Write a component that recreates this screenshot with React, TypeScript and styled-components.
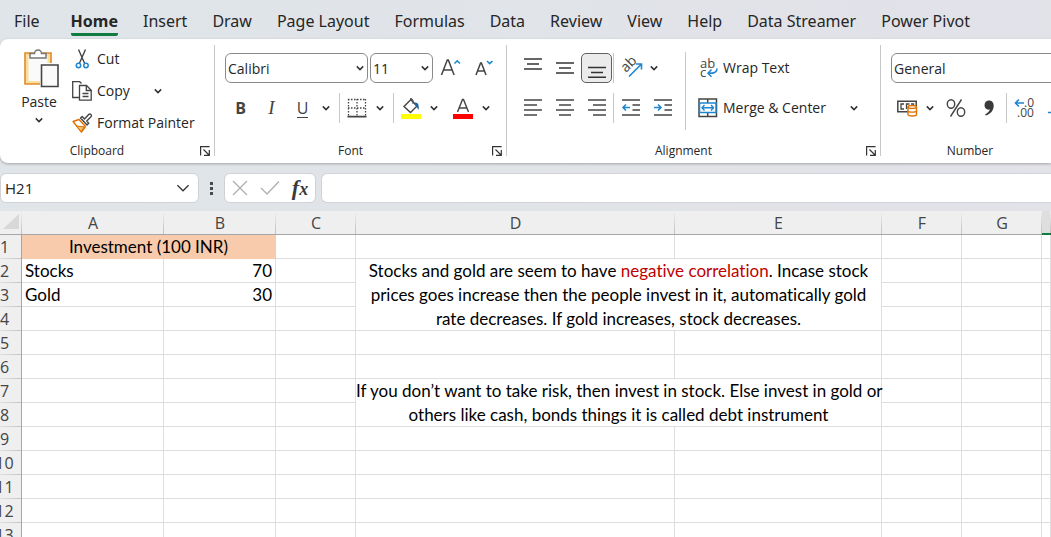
import React from "react";
import styled, { createGlobalStyle, css } from "styled-components";

const uiFont = `"Open Sans", "Noto Sans", sans-serif`;
const tabFont = `"Noto Sans", "Open Sans", sans-serif`;
const cellFont = `Lato, "Noto Sans", sans-serif`;
const ink = "#262626";
const stroke = "#444444";
const blue = "#1f87d0";

const GlobalStyle = createGlobalStyle`
  *, *::before, *::after { box-sizing: border-box; }
  body { margin: 0; }
  button, input, select { font: inherit; color: inherit; margin: 0; padding: 0; border: 0; background: none; }
  svg { display: block; flex: none; overflow: visible; }
`;

const Window = styled.div`
  display: flex;
  flex-direction: column;
  height: 100vh;
  overflow: hidden;
  color: ${ink};
  background: linear-gradient(90deg, #dfe5e8, #e2e2e9);
  font-family: ${uiFont};
  font-size: 14px;
`;

const TabBar = styled.nav`
  flex: none;
  display: flex;
  gap: 25px;
  height: 39px;
  padding: 9px 0 0 14px;
  overflow: hidden;
`;

const Tab = styled.button<{ $active?: boolean; $first?: boolean }>`
  flex: none;
  height: 27px;
  font-family: ${tabFont};
  font-size: 16px;
  line-height: 24px;
  white-space: nowrap;
  font-weight: ${(p) => (p.$active ? 700 : 400)};
  border-bottom: 3px solid ${(p) => (p.$active ? "#107c41" : "transparent")};
  border-radius: 2px;
  margin-right: ${(p) => (p.$first ? "6px" : "0")};
`;

const Ribbon = styled.div`
  flex: none;
  display: flex;
  padding: 4px 0 6px;
  background: #ffffff;
  border-radius: 8px 0 0 8px;
  box-shadow: 0 1px 3px rgba(0, 0, 0, 0.28);
  overflow: hidden;
`;

const Group = styled.section<{ $width: number; $grow?: boolean }>`
  flex: ${(p) => (p.$grow ? 1 : 0)} 0 ${(p) => p.$width}px;
  display: flex;
  flex-direction: column;
`;

const GroupBody = styled.div`
  display: flex;
  height: 98px;
  padding-left: 10px;
`;

const GroupFooter = styled.div`
  display: flex;
  gap: 6px;
  align-items: flex-end;
  padding-right: 4px;
  height: 16px;
`;

const GroupTitle = styled.span`
  flex: 1;
  text-align: center;
  font-size: 12px;
  line-height: 12px;
`;

const GroupDivider = styled.div`
  flex: none;
  width: 1px;
  margin: 2px 0 1px;
  background: #c8c8c8;
`;

const Launcher = styled.button`
  width: 10px;
  height: 12px;
`;

const Stack = styled.div<{ $gap?: number; $top?: number }>`
  display: flex;
  flex-direction: column;
  gap: ${(p) => p.$gap ?? 0}px;
  padding-top: ${(p) => p.$top ?? 0}px;
`;

const Row = styled.div<{ $gap?: number; $tall?: number }>`
  display: flex;
  align-items: center;
  gap: ${(p) => p.$gap ?? 0}px;
  height: ${(p) => p.$tall ?? 30}px;
`;

const Divider = styled.div<{ $tall?: boolean }>`
  flex: none;
  width: 1px;
  background: #c8c8c8;
  ${(p) =>
    p.$tall
      ? css`
          height: 78px;
          margin: 9px 12px 0 7px;
        `
      : css`
          height: 30px;
        `}
`;

const Section = styled.div`
  display: flex;
  align-items: center;
  gap: 1px;
  margin-left: 5px;
`;

const IconButton = styled.button<{ $pressed?: boolean }>`
  flex: none;
  display: flex;
  align-items: center;
  justify-content: center;
  width: 31px;
  height: 30px;
  ${(p) =>
    p.$pressed &&
    css`
      background: #ebebeb;
      border: 1px solid #616161;
      border-radius: 5px;
    `}
`;

const ArrowButton = styled.button`
  flex: none;
  display: flex;
  align-items: center;
  justify-content: center;
  width: 16px;
  height: 30px;
`;

const Split = styled.div`
  display: flex;
`;

const Letter = styled.span<{ $kind: "bold" | "italic" | "underline" }>`
  font-size: 16px;
  line-height: 20px;
  color: ${stroke};
  ${(p) => p.$kind === "bold" && css`font-weight: 700;`}
  ${(p) =>
    p.$kind === "italic" &&
    css`
      font-family: "Liberation Serif", serif;
      font-style: italic;
      font-size: 19px;
    `}
  ${(p) => p.$kind === "underline" && css`border-bottom: 1px solid ${stroke}; line-height: 18px;`}
`;

const PasteButton = styled.button`
  flex: none;
  display: flex;
  flex-direction: column;
  align-items: center;
  width: 60px;
  padding-top: 5px;
  margin: 0 3px 0 -1px;
  line-height: 28px;
`;

const LabelButton = styled.button`
  flex: none;
  display: flex;
  align-items: center;
  gap: 5px;
  line-height: 20px;
  white-space: nowrap;
`;

const Combo = styled.div<{ $width?: number }>`
  display: grid;
  align-items: center;
  ${(p) => (p.$width ? css`width: ${p.$width}px;` : css`flex: 1;`)}
  height: 30px;
  border: 1px solid #8a8a8a;
  border-radius: 6px;

  > * {
    grid-area: 1 / 1;
  }

  > svg {
    justify-self: end;
    margin-right: 3px;
    pointer-events: none;
  }
`;

const ComboSelect = styled.select`
  appearance: none;
  width: 100%;
  height: 28px;
  padding-left: 2px;
`;

const FormulaRow = styled.div`
  flex: none;
  display: flex;
  align-items: center;
  padding: 10px 0 8px;
  height: 48px;
`;

const Field = styled.div<{ $width?: number }>`
  display: flex;
  align-items: center;
  height: 30px;
  background: #ffffff;
  border: 1px solid #d0d2d5;
  border-radius: 6px;
  ${(p) => (p.$width ? css`flex: none; width: ${p.$width}px;` : css`flex: 1; border-right: 0; border-radius: 6px 0 0 6px;`)}
`;

const NameInput = styled.input`
  flex: 1;
  min-width: 0;
  padding-left: 4px;
  font-size: 15px;
  outline: none;
`;

const FormulaInput = styled.input`
  width: 100%;
  padding: 0 8px;
  outline: none;
`;

const FieldButton = styled.button`
  display: flex;
  align-items: center;
  justify-content: center;
  width: 30px;
  height: 28px;
`;

const FxMark = styled.span`
  font-family: "Liberation Serif", serif;
  font-style: italic;
  font-weight: 700;
  font-size: 22px;
  line-height: 24px;
  color: #3a3a3a;

  > small {
    font-size: 18px;
  }
`;

const FormulaGap = styled.div`
  flex: none;
  width: 5px;
`;

const Grip = styled.div`
  display: flex;
  flex-direction: column;
  align-items: center;
  gap: 2px;
  width: 25px;

  > i {
    width: 3px;
    height: 3px;
    background: #4a4a4a;
  }
`;

const SheetArea = styled.main`
  flex: 1;
  min-height: 0;
  overflow: hidden;
  margin-left: -12px;
  background: #ffffff;
`;

const Sheet = styled.table`
  table-layout: fixed;
  width: 100%;
  border-collapse: separate;
  border-spacing: 0;
`;

const HeadCell = styled.th<{ $selected?: boolean }>`
  height: 24px;
  padding: 0;
  font-size: 16px;
  line-height: 22px;
  font-weight: 400;
  color: ${stroke};
  background: linear-gradient(#efefef, #bfbfbf) right / 1px 100% no-repeat, ${(p) => (p.$selected ? "#dedede" : "#efefef")};
  border-bottom: ${(p) => (p.$selected ? "2px solid #107c41" : "1px solid #a6a6a6")};
`;

const Corner = styled(HeadCell)`
  padding: 0 3px 3px 0;

  > svg {
    margin-left: auto;
  }
`;

const RowHead = styled.th`
  height: 24px;
  padding: 0;
  font-size: 16px;
  line-height: 22px;
  font-weight: 400;
  color: ${stroke};
  background: linear-gradient(90deg, #efefef, #c4c4c4) bottom / 100% 1px no-repeat, #efefef;
  border-right: 1px solid #a6a6a6;
`;

const Cell = styled.td<{ $align?: "right" | "center"; $fill?: string }>`
  height: 24px;
  padding: 0 3px;
  font-family: ${cellFont};
  font-size: 17px;
  line-height: 23px;
  font-variant-ligatures: none;
  color: #000000;
  white-space: nowrap;
  text-align: ${(p) => p.$align ?? "left"};
  background: ${(p) => p.$fill ?? "#ffffff"};
  border-right: 1px solid ${(p) => p.$fill ?? "#dedede"};
  border-bottom: 1px solid ${(p) => p.$fill ?? "#dedede"};
`;

const Note = styled(Cell)`
  padding: 0;
  line-height: 24px;
  border-bottom: 0;
  box-shadow: inset 0 -1px #dedede;
`;

const Emphasis = styled.span`
  color: #c00000;
`;

const Chevron = ({ size = 8 }: { size?: number }) => (
  <svg width={size} height={size} viewBox="0 0 8 8" fill="none" stroke="#333" strokeWidth={size > 8 ? 0.7 : 1.5}>
    <path d="M.8 2.4 4 5.6 7.2 2.4" />
  </svg>
);

const Lines = ({ lines, color = stroke }: { lines: [number, number, number][]; color?: string }) => (
  <svg width="20" height="20" viewBox="0 0 20 20" stroke={color} strokeWidth="1.5">
    {lines.map(([x1, x2, y]) => (
      <path key={y} d={`M${x1} ${y}H${x2}`} />
    ))}
  </svg>
);

const PasteIcon = () => (
  <svg width="40" height="40" viewBox="0 0 40 40" fill="none">
    <path d="M6 5h26v31H6z" fill="#fadf9c" stroke="#e08a2c" strokeWidth="1.6" />
    <path d="M9.5 8h19v25h-19z" fill="#fafafa" />
    <path d="M11 10V5.5h4.5a3.5 3.5 0 0 1 7 0H27V10z" fill="#fff" stroke="#777" strokeWidth="1.5" />
    <path d="M21 15h19v25H21z" fill="#fff" />
    <path d="M22.5 17H39v21.5H22.5z" fill="#fafafa" stroke={stroke} strokeWidth="1.6" />
  </svg>
);

const CutIcon = () => (
  <svg width="20" height="20" viewBox="0 0 20 20" fill="none">
    <path d="M6.5.5 12.7 14.5M13.5.5 7.3 14.5" stroke={stroke} strokeWidth="1.4" />
    <circle cx="6.5" cy="16.5" r="2.2" stroke={blue} strokeWidth="1.5" />
    <circle cx="14" cy="16.5" r="2.2" stroke={blue} strokeWidth="1.5" />
  </svg>
);

const CopyIcon = () => (
  <svg width="20" height="20" viewBox="0 0 20 20" fill="none" stroke={stroke} strokeWidth="1.3">
    <path d="M7 16.5H.7V.7h7L9.5 2.5" />
    <path d="M7.5 4.5h7l4.7 4.7v10H7.5z" fill="#fff" />
    <path d="M14.3 4.5v5h5M10.5 12.5h6M10.5 15.5h6" />
  </svg>
);

const PainterIcon = () => (
  <svg width="20" height="20" viewBox="0 0 20 20" fill="none" strokeLinejoin="round">
    <path d="M1 8.5 7 6.5l6.5 7-4 5.5z" fill="#fff" stroke="#e07000" strokeWidth="1.4" />
    <path d="M4.5 13 12 13.8 9.3 18.7z" fill="#f6c069" stroke="#e07000" />
    <path d="M8.5 5 15 12l1.7-1.7-2-2.3 4.3-4.2a1.5 1.5 0 0 0-2.3-2.2L12.5 6l-2.3-2.5z" fill="#fff" stroke={stroke} strokeWidth="1.4" />
  </svg>
);

const LauncherIcon = () => (
  <svg width="10" height="10" viewBox="0 0 10 10" fill="none" stroke="#333" strokeWidth="1.2">
    <path d="M.6 9.5V.6h9M3.5 3.5l5.5 5.5M9.3 4v5.3H4" />
  </svg>
);

const FontSizeIcon = ({ grow }: { grow?: boolean }) => (
  <svg width="22" height="22" viewBox="0 0 22 22" fill="none">
    {grow ? (
      <>
        <path d="M1.5 18 7.3 3h1l5.8 15M3.5 13h8.7" stroke={stroke} strokeWidth="1.5" />
        <path d="m14.5 6.5 2.7-2.7L20 6.5" stroke={blue} strokeWidth="1.6" />
      </>
    ) : (
      <>
        <path d="M3 18 7.6 6h.8L13 18M4.5 14h7" stroke={stroke} strokeWidth="1.5" />
        <path d="m14 4 2.7 2.7L19.5 4" stroke={blue} strokeWidth="1.6" />
      </>
    )}
  </svg>
);

const BordersIcon = () => (
  <svg width="20" height="20" viewBox="0 0 20 20" fill="none" stroke={stroke}>
    <path d="M1 1.5h18M1 10h18M1.5 1v17M10 1v17M18.5 1v17" strokeWidth="1.3" strokeDasharray="1.5 1.5" />
    <path d="M.5 18.7h19" strokeWidth="1.8" />
  </svg>
);

const FillIcon = () => (
  <svg width="20" height="22" viewBox="0 0 20 22" fill="none">
    <path d="M9.5 2.5 16 9l-6.5 6.5L3 9.5l7-7V1" stroke={stroke} strokeWidth="1.4" />
    <path d="M9 2.5a2 2 0 0 1 3 .5v4" stroke={stroke} />
    <path d="M13.5 5.5c4-.5 4.5 2.5 4.3 7.5-1.5-1.500-2-3.500-4.300-5.500z" fill="#1766a6" />
    <path d="M0 17h20v5H0z" fill="#ffff00" />
  </svg>
);

const FontColorIcon = () => (
  <svg width="20" height="22" viewBox="0 0 20 22" fill="none">
    <path d="M4.5 15 9.5 2.5h1l5 12.5M6.2 11h7.6" stroke={stroke} strokeWidth="1.4" />
    <path d="M0 17h20v5H0z" fill="#ff0000" />
  </svg>
);

const OrientIcon = () => (
  <svg width="22" height="22" viewBox="0 0 22 22" fill="none">
    <text x="6" y="16" transform="rotate(-45 6 16)" fontSize="14" fill={stroke}>
      ab
    </text>
    <path d="M9 19.5 21 7.5M16 7h5.5v5.5" stroke={blue} strokeWidth="1.6" />
  </svg>
);

const IndentIcon = ({ right }: { right?: boolean }) => (
  <svg width="20" height="20" viewBox="0 0 20 20" fill="none">
    <path d="M1 2h18M11.5 7H19M11.5 12H19M1 17h18" stroke={stroke} strokeWidth="1.5" />
    <path d={right ? "M1 9.500h7M5 6.500l3 3-3 3" : "M9 9.500H2M5 6.500l-3 3 3 3"} stroke={blue} strokeWidth="1.6" />
  </svg>
);

const WrapIcon = () => (
  <svg width="20" height="22" viewBox="0 0 20 22" fill="none">
    <text fontSize="13" fill={stroke}>
      <tspan x="2" y="11">ab</tspan>
      <tspan x="2" y="20">c</tspan>
    </text>
    <path d="M19 11.5c0 3.5-2 4.8-9 4.8M13.5 12.5 10 16.3l3.5 3.5" stroke={blue} strokeWidth="1.6" />
  </svg>
);

const MergeIcon = () => (
  <svg width="20" height="20" viewBox="0 0 20 20" fill="none">
    <path d="M1 1h17.5v17.5H1zM9.7 1v4M9.7 14.5v4" stroke={stroke} strokeWidth="1.5" />
    <path d="M1.5 5h16.5v9.5H1.5z" fill="#fff" stroke={blue} strokeWidth="1.5" />
    <path d="M4 9.7h11.5M6.5 7 4 9.7l2.5 2.7M13 7l2.5 2.7L13 12.4" stroke={blue} strokeWidth="1.4" />
  </svg>
);

const CurrencyIcon = () => (
  <svg width="20" height="18" viewBox="0 0 20 18" fill="none">
    <path d="M.8 2.3h18.4v10.4H.8z" stroke={stroke} strokeWidth="1.5" />
    <path d="M7 5H4v5h3M12.5 5h-3v5M14 5h2.5v2" stroke={stroke} strokeWidth="1.3" />
    <path d="M11 8c0-2 8.5-2 8.5 0v7.5c0 2-8.5 2-8.5 0z" fill="#fff" stroke="#e07000" strokeWidth="1.4" />
    <path d="M11 8c0 1.8 8.5 1.8 8.5 0M11 11.8c0 1.8 8.5 1.8 8.5 0" stroke="#e07000" strokeWidth="1.4" />
  </svg>
);

const PercentIcon = () => (
  <svg width="20" height="20" viewBox="0 0 20 20" fill="none" stroke={stroke} strokeWidth="1.4">
    <ellipse cx="5" cy="6" rx="3.7" ry="4.3" />
    <ellipse cx="15" cy="14" rx="3.7" ry="4.3" />
    <path d="M15.5 1.5 4.5 18.5" />
  </svg>
);

const CommaIcon = () => (
  <svg width="12" height="18" viewBox="0 0 12 18" fill="#3a3a3a">
    <path d="M6 1.5c3 0 4.7 2.2 4.7 5.2 0 4.8-3.2 8.3-8 9.8l-.5-1.3c2.5-1.2 4.3-2.8 4.6-4.7-3 .7-5.3-1.3-5.3-4.3C1.5 3.5 3.5 1.5 6 1.5z" />
  </svg>
);

const DecimalIcon = ({ less }: { less?: boolean }) => (
  <svg width="22" height="22" viewBox="0 0 22 22" fill="none">
    <text fontSize="12" fill={stroke}>
      <tspan x={less ? 6 : 10} y="10">{less ? ".00" : ".0"}</tspan>
      {!less && (
        <tspan x="3" y="20">.00</tspan>
      )}
    </text>
    <path d={less ? "M1 15.5h10M8 12l3.5 3.5L8 19" : "M10 6H2M5 2.5 1.5 6 5 9.5"} stroke={blue} strokeWidth="1.6" />
  </svg>
);

const tabs = [
  "File",
  "Home",
  "Insert",
  "Draw",
  "Page Layout",
  "Formulas",
  "Data",
  "Review",
  "View",
  "Help",
  "Data Streamer",
  "Power Pivot",
];

const columns: [string, number?][] = [["A", 142], ["B", 112], ["C", 80], ["D", 319], ["E", 207], ["F", 80], ["G", 80], [""]];
const rows = Array.from({ length: 13 }, (_, i) => i + 1);

const Arrow = ({ label }: { label: string }) => (
  <ArrowButton aria-label={label}>
    <Chevron />
  </ArrowButton>
);

const Footer = ({ title }: { title: string }) => (
  <GroupFooter>
    <GroupTitle>{title}</GroupTitle>
    <Launcher aria-label={`${title} settings`}>
      <LauncherIcon />
    </Launcher>
  </GroupFooter>
);

function ClipboardGroup() {
  return (
    <Group $width={214}>
      <GroupBody>
        <PasteButton>
          <PasteIcon />
          Paste
          <Chevron />
        </PasteButton>
        <Stack>
          <Row $tall={32}>
            <LabelButton>
              <CutIcon /> Cut
            </LabelButton>
          </Row>
          <Row $tall={32} $gap={20}>
            <LabelButton>
              <CopyIcon /> Copy
            </LabelButton>
            <Arrow label="Copy options" />
          </Row>
          <Row $tall={32}>
            <LabelButton>
              <PainterIcon /> Format Painter
            </LabelButton>
          </Row>
        </Stack>
      </GroupBody>
      <Footer title="Clipboard" />
    </Group>
  );
}

function FontGroup() {
  return (
    <Group $width={291}>
      <GroupBody>
        <Stack $gap={10} $top={10}>
          <Row $gap={2}>
            <Combo $width={143}>
              <ComboSelect aria-label="Font">
                <option>Calibri</option>
              </ComboSelect>
              <Chevron />
            </Combo>
            <Combo $width={63}>
              <ComboSelect aria-label="Font size">
                <option>11</option>
              </ComboSelect>
              <Chevron />
            </Combo>
            <IconButton aria-label="Increase font size">
              <FontSizeIcon grow />
            </IconButton>
            <IconButton aria-label="Decrease font size">
              <FontSizeIcon />
            </IconButton>
          </Row>
          <Row>
            <IconButton aria-label="Bold">
              <Letter $kind="bold">B</Letter>
            </IconButton>
            <IconButton aria-label="Italic">
              <Letter $kind="italic">I</Letter>
            </IconButton>
            <Split>
              <IconButton aria-label="Underline">
                <Letter $kind="underline">U</Letter>
              </IconButton>
              <Arrow label="Underline options" />
            </Split>
            <Section>
              <Divider />
              <Split>
                <IconButton aria-label="Borders">
                  <BordersIcon />
                </IconButton>
                <Arrow label="Border options" />
              </Split>
            </Section>
            <Section>
              <Divider />
              <Split>
                <IconButton aria-label="Fill colour">
                  <FillIcon />
                </IconButton>
                <Arrow label="Fill colour options" />
              </Split>
            </Section>
            <Section>
              <Split>
                <IconButton aria-label="Font colour">
                  <FontColorIcon />
                </IconButton>
                <Arrow label="Font colour options" />
              </Split>
            </Section>
          </Row>
        </Stack>
      </GroupBody>
      <Footer title="Font" />
    </Group>
  );
}

function AlignmentGroup() {
  return (
    <Group $width={373}>
      <GroupBody>
        <Stack $gap={10} $top={10}>
          <Row $gap={1}>
            <IconButton aria-label="Top align">
              <Lines color="#333" lines={[[1, 19, 1], [4, 16, 6], [1, 19, 11]]} />
            </IconButton>
            <IconButton aria-label="Middle align">
              <Lines color="#333" lines={[[1, 19, 5], [4, 16, 10], [1, 19, 15]]} />
            </IconButton>
            <IconButton $pressed aria-label="Bottom align" aria-pressed="true">
              <Lines color="#333" lines={[[1, 19, 9.5], [4, 16, 14.5], [1, 19, 19.2]]} />
            </IconButton>
            <Divider />
            <Split>
              <IconButton aria-label="Orientation">
                <OrientIcon />
              </IconButton>
              <Arrow label="Orientation options" />
            </Split>
          </Row>
          <Row $gap={1}>
            <IconButton aria-label="Align left">
              <Lines lines={[[1, 19, 2], [1, 14, 7], [1, 19, 12], [1, 14, 17]]} />
            </IconButton>
            <IconButton aria-label="Center">
              <Lines lines={[[1, 19, 2], [4, 16, 7], [1, 19, 12], [4, 16, 17]]} />
            </IconButton>
            <IconButton aria-label="Align right">
              <Lines lines={[[1, 19, 2], [6, 19, 7], [1, 19, 12], [6, 19, 17]]} />
            </IconButton>
            <Divider />
            <IconButton aria-label="Decrease indent">
              <IndentIcon />
            </IconButton>
            <IconButton aria-label="Increase indent">
              <IndentIcon right />
            </IconButton>
          </Row>
        </Stack>
        <Divider $tall />
        <Stack $gap={10} $top={10}>
          <Row>
            <LabelButton>
              <WrapIcon /> Wrap Text
            </LabelButton>
          </Row>
          <Row $gap={20}>
            <LabelButton>
              <MergeIcon /> Merge &amp; Center
            </LabelButton>
            <Arrow label="Merge options" />
          </Row>
        </Stack>
      </GroupBody>
      <Footer title="Alignment" />
    </Group>
  );
}

function NumberGroup() {
  return (
    <Group $width={198} $grow>
      <GroupBody>
        <Stack $gap={10} $top={10}>
          <Row>
            <Combo>
              <ComboSelect aria-label="Number format">
                <option>General</option>
              </ComboSelect>
              <Chevron />
            </Combo>
          </Row>
          <Row $gap={2}>
            <Split>
              <IconButton aria-label="Accounting format">
                <CurrencyIcon />
              </IconButton>
              <Arrow label="Accounting options" />
            </Split>
            <IconButton aria-label="Percent style">
              <PercentIcon />
            </IconButton>
            <IconButton aria-label="Comma style">
              <CommaIcon />
            </IconButton>
            <Divider />
            <IconButton aria-label="Increase decimal">
              <DecimalIcon />
            </IconButton>
            <IconButton aria-label="Decrease decimal">
              <DecimalIcon less />
            </IconButton>
          </Row>
        </Stack>
      </GroupBody>
      <Footer title="Number" />
    </Group>
  );
}

const plain = (row: number, cols: string[]) => cols.map((c) => <Cell key={`${c}${row}`} />);

function rowCells(row: number) {
  const tail = plain(row, ["F", "G", "H"]);
  switch (row) {
    case 1:
      return (
        <>
          <Cell colSpan={2} $align="center" $fill="#f8cbad">
            Investment (100 INR)
          </Cell>
          {plain(row, ["C", "D", "E"])}
          {tail}
        </>
      );
    case 2:
      return (
        <>
          <Cell>Stocks</Cell>
          <Cell $align="right">70</Cell>
          <Cell />
          <Note colSpan={2} rowSpan={3} $align="center">
            Stocks and gold are seem to have <Emphasis>negative correlation</Emphasis>. Incase stock
            <br />
            prices goes increase then the people invest in it, automatically gold
            <br />
            rate decreases. If gold increases, stock decreases.
          </Note>
          {tail}
        </>
      );
    case 3:
      return (
        <>
          <Cell>Gold</Cell>
          <Cell $align="right">30</Cell>
          <Cell />
          {tail}
        </>
      );
    case 7:
      return (
        <>
          {plain(row, ["A", "B", "C"])}
          <Note colSpan={2} rowSpan={2} $align="center">
            If you don’t want to take risk, then invest in stock. Else invest in gold or
            <br />
            others like cash, bonds things it is called debt instrument
          </Note>
          {tail}
        </>
      );
    case 4:
    case 8:
      return (
        <>
          {plain(row, ["A", "B", "C"])}
          {tail}
        </>
      );
    default:
      return (
        <>
          {plain(row, ["A", "B", "C", "D", "E"])}
          {tail}
        </>
      );
  }
}

export default function App() {
  return (
    <Window>
      <GlobalStyle />
      <TabBar>
        {tabs.map((t) => (
          <Tab key={t} $first={t === "File"} $active={t === "Home"}>
            {t}
          </Tab>
        ))}
      </TabBar>
      <Ribbon>
        <ClipboardGroup />
        <GroupDivider />
        <FontGroup />
        <GroupDivider />
        <AlignmentGroup />
        <GroupDivider />
        <NumberGroup />
      </Ribbon>
      <FormulaRow>
        <Field $width={199}>
          <NameInput aria-label="Name box" defaultValue="H21" />
          <FieldButton aria-label="Name list">
            <Chevron size={14} />
          </FieldButton>
        </Field>
        <Grip>
          <i />
          <i />
          <i />
        </Grip>
        <Field $width={92}>
          <FieldButton aria-label="Cancel">
            <svg width="16" height="16" viewBox="0 0 16 16" stroke="#b0b0b0" strokeWidth="1.4">
              <path d="M1 1l14 14M15 1 1 15" />
            </svg>
          </FieldButton>
          <FieldButton aria-label="Enter">
            <svg width="20" height="16" viewBox="0 0 20 16" fill="none" stroke="#b0b0b0" strokeWidth="1.4">
              <path d="M1 8l6 6L19 1.5" />
            </svg>
          </FieldButton>
          <FieldButton aria-label="Insert function">
            <FxMark>
              f<small>x</small>
            </FxMark>
          </FieldButton>
        </Field>
        <FormulaGap />
        <Field>
          <FormulaInput aria-label="Formula" />
        </Field>
      </FormulaRow>
      <SheetArea>
        <Sheet>
          <colgroup>
            <col width={34} />
            {columns.map(([name, width]) => (
              <col key={name} width={width} />
            ))}
          </colgroup>
          <thead>
            <tr>
              <Corner aria-label="Select all">
                <svg width="16" height="15" viewBox="0 0 16 15">
                  <path d="M16 0v15H0z" fill="#d8d8d8" />
                </svg>
              </Corner>
              {columns.map(([name]) => (
                <HeadCell key={name} scope="col" $selected={name === ""}>
                  {name}
                </HeadCell>
              ))}
            </tr>
          </thead>
          <tbody>
            {rows.map((r) => (
              <tr key={r}>
                <RowHead scope="row">{r}</RowHead>
                {rowCells(r)}
              </tr>
            ))}
          </tbody>
        </Sheet>
      </SheetArea>
    </Window>
  );
}
